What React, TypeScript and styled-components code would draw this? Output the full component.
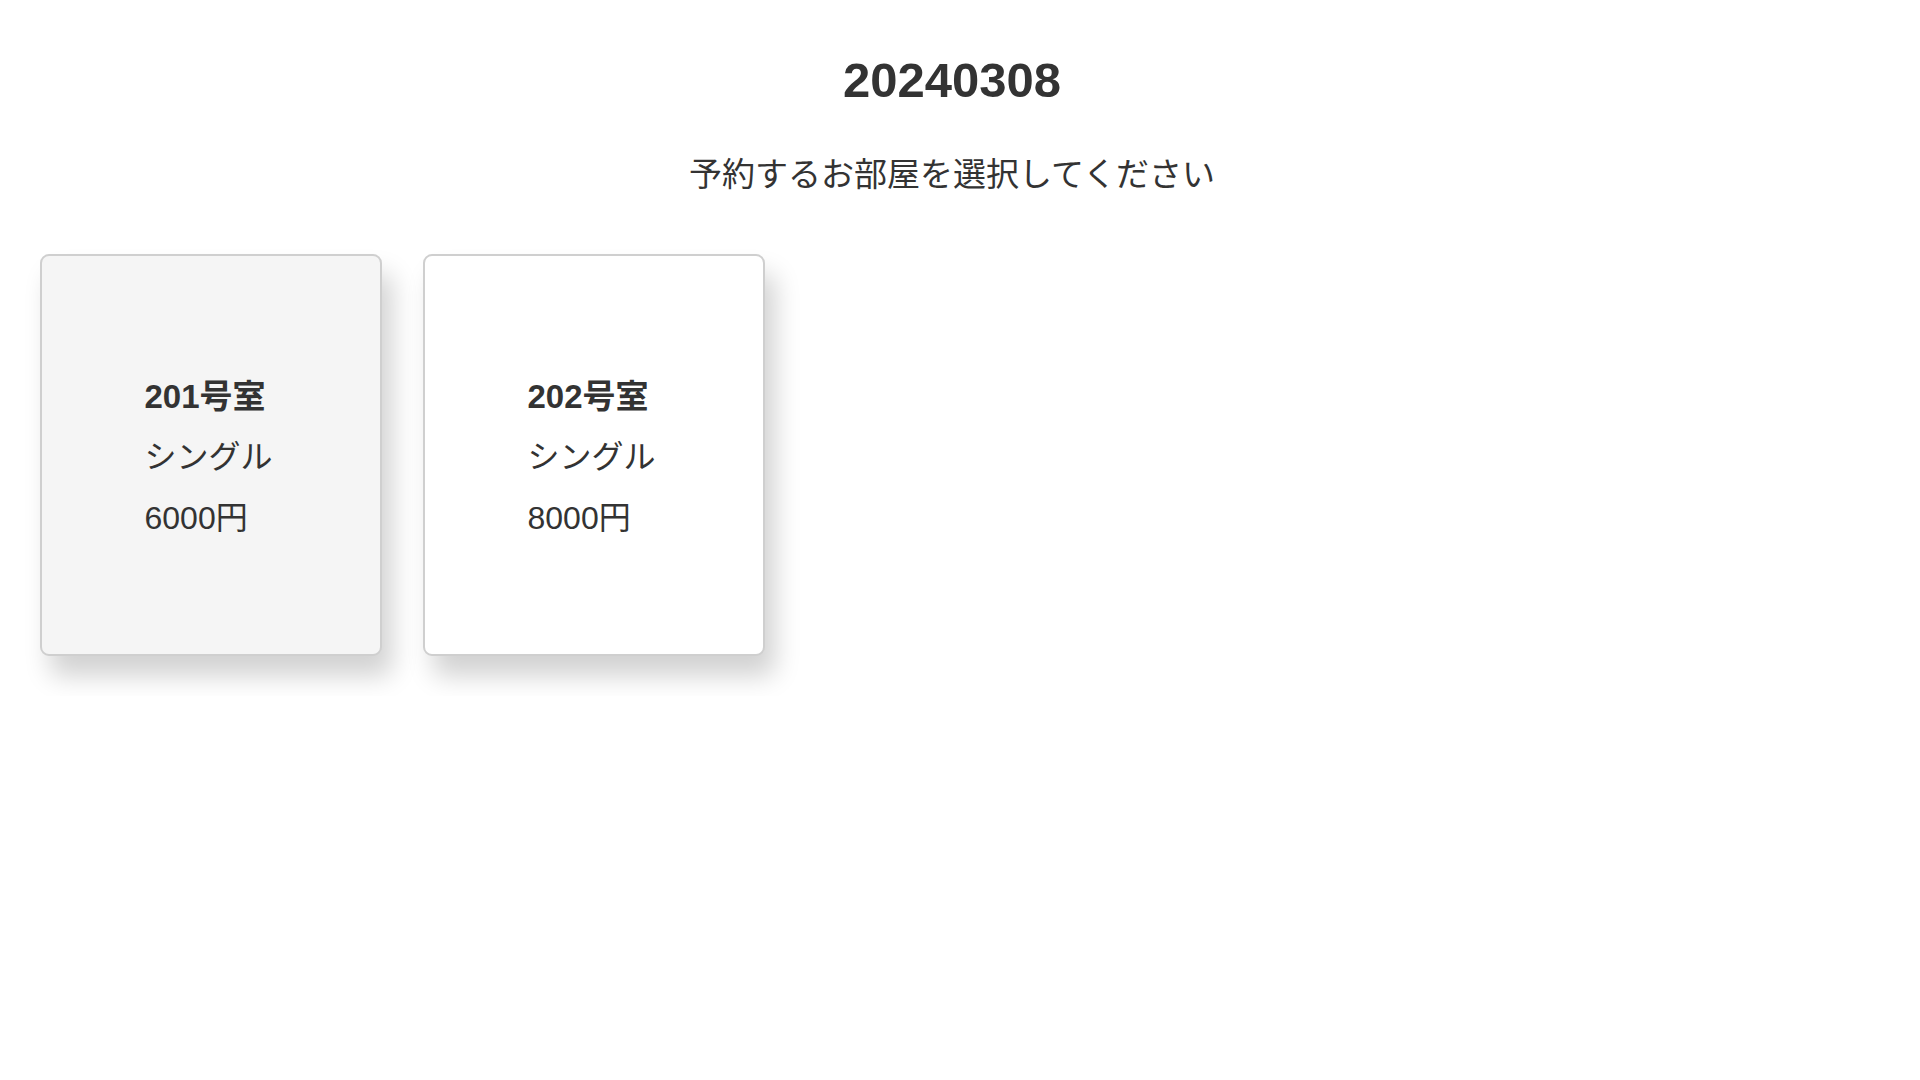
import React from "react";
import styled, { createGlobalStyle } from "styled-components";

const GlobalStyle = createGlobalStyle`
  html, body {
    margin: 0;
    padding: 0;
    background: #ffffff;
  }
  body {
    font-family: "Liberation Sans", Arial, "Noto Sans CJK JP", sans-serif;
    color: #333333;
  }
`;

const Page = styled.div`
  display: flex;
  flex-direction: column;
  padding: 52px 16px 40px 0;
`;

const Title = styled.h1`
  margin: 0;
  text-align: center;
  font-size: 49px;
  line-height: 56px;
  font-weight: 700;
  color: #333333;
`;

const Subtitle = styled.p`
  margin: 46px 0 0;
  text-align: center;
  font-size: 33px;
  line-height: 42px;
  color: #333333;
`;

const CardList = styled.div`
  display: flex;
  gap: 41px;
  padding-left: 40px;
  margin-top: 58px;
`;

const Card = styled.div<{ $selected?: boolean }>`
  width: 342px;
  height: 402px;
  box-sizing: border-box;
  border: 2px solid #cfcfcf;
  border-radius: 9px;
  background: ${(p) => (p.$selected ? "#f5f5f5" : "#ffffff")};
  box-shadow: 10px 20px 26px rgba(0, 0, 0, 0.18);
  display: flex;
  align-items: center;
  justify-content: center;
  cursor: pointer;
`;

const CardBody = styled.div`
  display: flex;
  flex-direction: column;
  align-items: flex-start;
  width: 133px;
  padding-top: 4px;
`;

const RoomName = styled.div`
  font-size: 33px;
  line-height: 61px;
  font-weight: 700;
  color: #333333;
`;

const Info = styled.div`
  font-size: 32px;
  line-height: 61px;
  color: #333333;
`;

const rooms = [
  { name: "201号室", type: "シングル", price: 6000, selected: true },
  { name: "202号室", type: "シングル", price: 8000, selected: false },
];

export default function App() {
  return (
    <>
      <GlobalStyle />
      <Page>
        <Title>20240308</Title>
        <Subtitle>予約するお部屋を選択してください</Subtitle>
        <CardList>
          {rooms.map((r) => (
            <Card key={r.name} $selected={r.selected}>
              <CardBody>
                <RoomName>{r.name}</RoomName>
                <Info>{r.type}</Info>
                <Info>{r.price}円</Info>
              </CardBody>
            </Card>
          ))}
        </CardList>
      </Page>
    </>
  );
}
